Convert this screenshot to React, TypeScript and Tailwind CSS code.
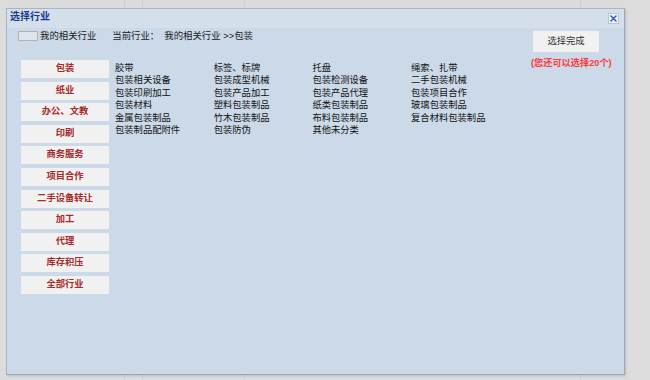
import React from "react";

const cats = ["包装", "纸业", "办公、文教", "印刷", "商务服务", "项目合作", "二手设备转让", "加工", "代理", "库存积压", "全部行业"];

const items = [
  "胶带", "标签、标牌", "托盘", "绳索、扎带",
  "包装相关设备", "包装成型机械", "包装检测设备", "二手包装机械",
  "包装印刷加工", "包装产品加工", "包装产品代理", "包装项目合作",
  "包装材料", "塑料包装制品", "纸类包装制品", "玻璃包装制品",
  "金属包装制品", "竹木包装制品", "布料包装制品", "复合材料包装制品",
  "包装制品配附件", "包装防伪", "其他未分类",
];

export default function App() {
  return (
    <div className="relative w-[650px] h-[380px] overflow-hidden bg-[#dcdcdc] font-['Liberation_Sans','Noto_Sans_CJK_SC',sans-serif]">
      <div className="absolute left-[124px] top-0 w-px h-full bg-[#cfcfcf]" />
      <div className="absolute left-[142px] top-0 w-px h-full bg-[#d2d2d2]" />
      <div className="absolute left-[244px] top-0 w-px h-full bg-[#d2d2d2]" />
      <div className="absolute left-[580px] top-0 w-px h-full bg-[#cfcfcf]" />

      <div className="absolute left-[6px] top-[8px] w-[619px] h-[367px] border border-[#a6b5c9] border-r-[#98a9bf] border-b-[#98a9bf] bg-[#cbd9e8] shadow-[1px_1px_2px_rgba(0,0,0,0.15)] flex flex-col">
        <div className="h-[19px] bg-[#d4dfeb] flex items-start justify-between pl-[3px] pr-[5px]">
          <span className="mt-[2px] text-[10px] leading-[12px] font-bold text-[#173c8c]">选择行业</span>
          <div className="mt-[4px] w-[11px] h-[11px] bg-[#eef3fa] border border-[#b8c6d8] flex items-center justify-center">
            <svg width="7" height="7" viewBox="0 0 7 7">
              <path d="M1 1L6 6M6 1L1 6" stroke="#3a5fb0" strokeWidth="1.6" strokeLinecap="round" />
            </svg>
          </div>
        </div>

        <div className="flex flex-1">
          <div className="flex-1 flex flex-col pl-[11px] pt-[1px]">
            <div className="h-[14px] flex items-center text-[9.4px] text-[#1a1a1a]">
              <div className="w-[20px] h-[10px] border border-[#b2b2b2] bg-[#dde5ee]" />
              <span className="ml-[2px]">我的相关行业</span>
              <span className="ml-[16px]">当前行业：&nbsp;&nbsp;我的相关行业 &gt;&gt;包装</span>
            </div>

            <div className="mt-[17px] flex items-start">
              <div className="ml-[3px] flex flex-col gap-[3.6px]">
                {cats.map((c) => (
                  <div
                    key={c}
                    className="w-[88px] h-[18px] bg-[#f1f1f1] flex items-center justify-center text-[9.3px] font-semibold text-[#a52a2a]"
                  >
                    {c}
                  </div>
                ))}
              </div>
              <div className="ml-[6px] mt-[2px] grid grid-cols-[98.7px_98.7px_98.7px_98.7px] text-[9.3px] leading-[12.4px] text-[#111]">
                {items.map((t) => (
                  <div key={t} className="whitespace-nowrap">{t}</div>
                ))}
              </div>
            </div>
          </div>

          <div className="w-[86px] mr-[7px] pt-[3px] flex flex-col">
            <div className="ml-[2px] w-[66px] h-[21px] bg-[#f1f1f1] flex items-center justify-center text-[9.3px] text-[#333]">
              选择完成
            </div>
            <div className="mt-[5px] h-[12px] leading-[12px] text-[9.2px] font-semibold text-[#ff3838] whitespace-nowrap">
              (您还可以选择20个)
            </div>
          </div>
        </div>
      </div>
    </div>
  );
}
